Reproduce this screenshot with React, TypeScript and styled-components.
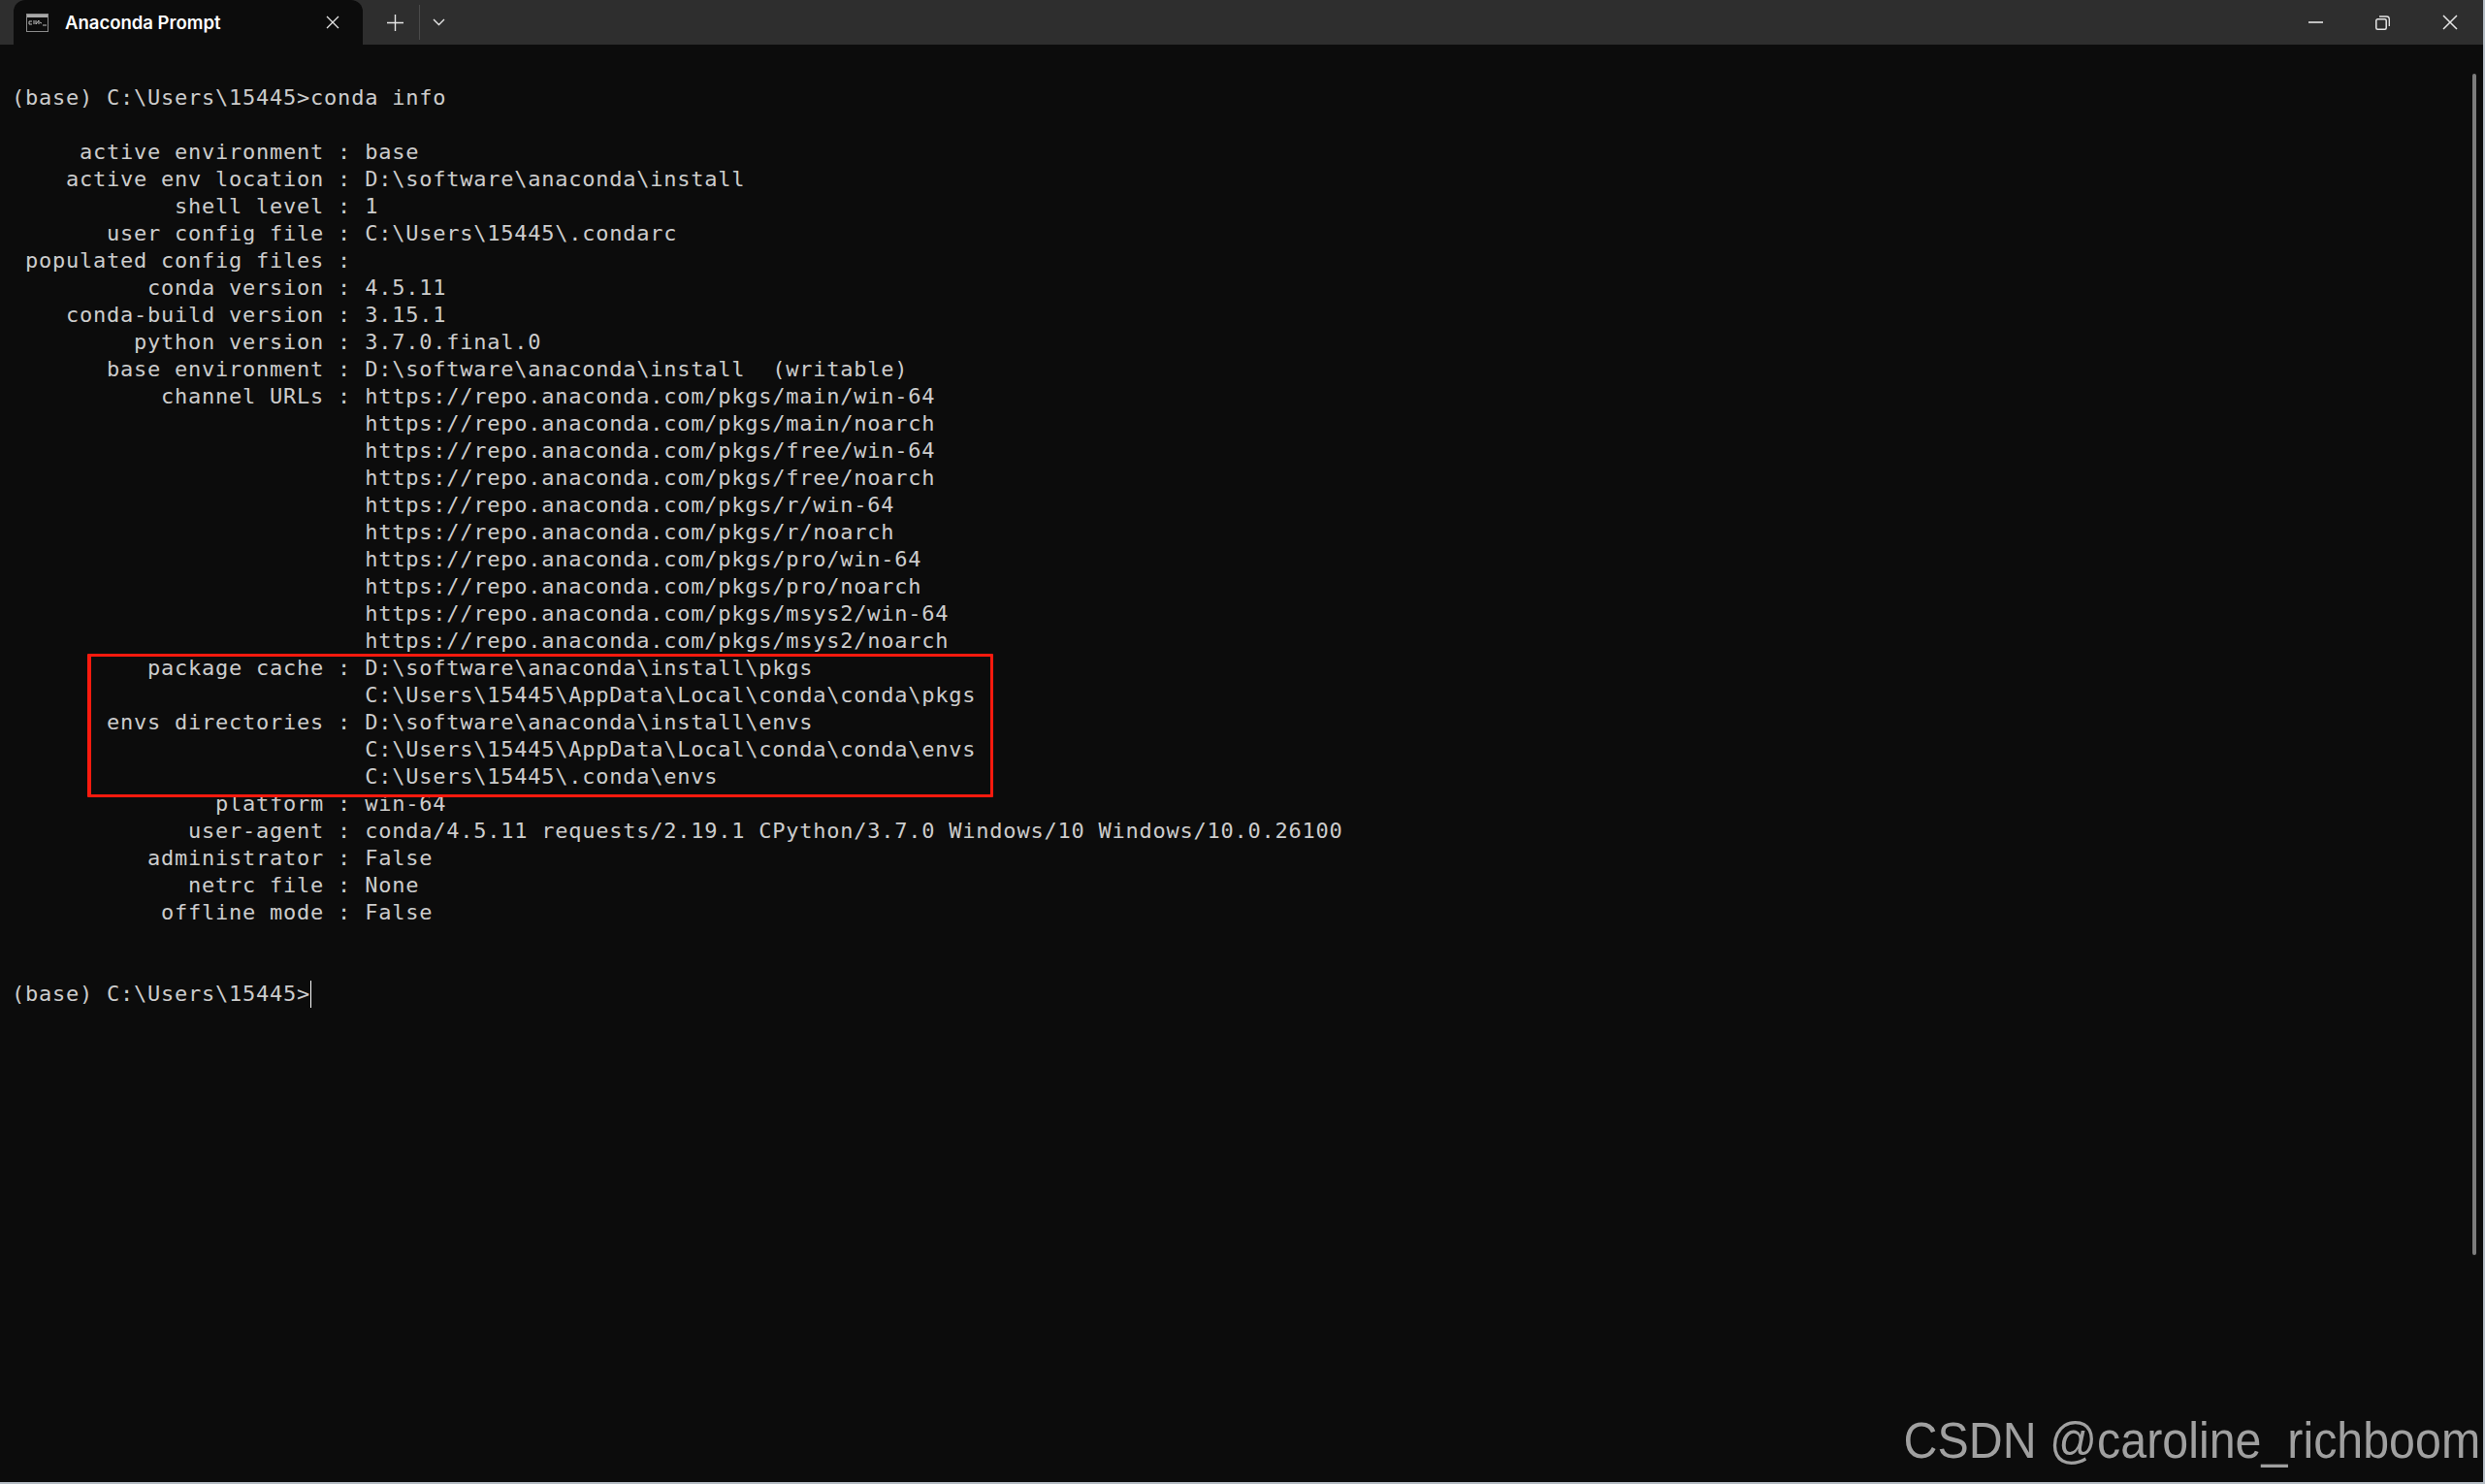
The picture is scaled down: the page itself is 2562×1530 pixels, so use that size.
import React from "react";
import styled, { createGlobalStyle } from "styled-components";

const GlobalStyle = createGlobalStyle`
  html, body {
    margin: 0;
    padding: 0;
    background: #0c0c0c;
  }
`;

const Window = styled.div`
  width: 2562px;
  height: 1530px;
  position: relative;
  overflow: hidden;
  background: #0c0c0c;
  display: flex;
  flex-direction: column;
`;

const TitleBar = styled.div`
  height: 46px;
  flex: none;
  background: #2e2e2e;
  display: flex;
  align-items: flex-end;
  padding-left: 14px;
`;

const Tab = styled.div`
  width: 360px;
  height: 46px;
  box-sizing: border-box;
  background: #0c0c0c;
  border-radius: 12px 12px 0 0;
  display: flex;
  align-items: center;
  padding: 0 24px 0 13px;
  color: #fff;
  font-family: "Inter", "Noto Sans", sans-serif;
  font-size: 18.5px;
  font-weight: 600;
`;

const TabTitle = styled.span`
  margin-left: 17px;
  flex: 1;
`;

const TabActions = styled.div`
  display: flex;
  align-items: center;
  height: 36px;
  margin: 0 0 5px 0;
  padding-left: 25px;
`;

const Divider = styled.div`
  width: 1px;
  height: 36px;
  background: #4a4a4a;
  margin: 0 13px 0 16px;
`;

const WindowButtons = styled.div`
  margin-left: auto;
  display: flex;
  align-items: center;
  gap: 54px;
  padding-right: 28px;
  height: 46px;
`;

const Icon = styled.svg`
  display: block;
  flex: none;
`;

const Screen = styled.pre`
  margin: 0;
  padding: 41px 0 0 12px;
  font-family: "DejaVu Sans Mono", "Liberation Mono", monospace;
  font-size: 22px;
  letter-spacing: 0.76px;
  line-height: 28px;
  color: #cccccc;
`;

const Cursor = styled.span`
  display: inline-block;
  width: 1px;
  height: 28px;
  background: #ffffff;
  vertical-align: -7px;
`;

const Highlight = styled.div`
  position: absolute;
  left: 90px;
  top: 674px;
  width: 934px;
  height: 148px;
  box-sizing: border-box;
  border: 3px solid #fb1a0e;
  border-left-width: 4px;
  border-radius: 1px;
`;

const ScrollThumb = styled.div`
  position: absolute;
  left: 2549px;
  top: 76px;
  width: 4px;
  height: 1218px;
  border-radius: 2px;
  background: #7c7c7c;
`;

const Watermark = styled.div`
  position: absolute;
  right: 5px;
  top: 1458px;
  font-family: "Liberation Sans", Arial, sans-serif;
  font-size: 51px;
  line-height: 56px;
  color: #a0a0a0;
  white-space: nowrap;
  transform: scaleX(0.948);
  transform-origin: right center;
`;

const BottomEdge = styled.div`
  position: absolute;
  left: 0;
  right: 0;
  bottom: 0;
  height: 2px;
  background: #b4bcc4;
`;

const RightEdge = styled.div`
  position: absolute;
  top: 0;
  right: 0;
  bottom: 0;
  width: 2px;
  background: #b4bcc4;
`;

const terminalText = `(base) C:\\Users\\15445>conda info

     active environment : base
    active env location : D:\\software\\anaconda\\install
            shell level : 1
       user config file : C:\\Users\\15445\\.condarc
 populated config files :
          conda version : 4.5.11
    conda-build version : 3.15.1
         python version : 3.7.0.final.0
       base environment : D:\\software\\anaconda\\install  (writable)
           channel URLs : https://repo.anaconda.com/pkgs/main/win-64
                          https://repo.anaconda.com/pkgs/main/noarch
                          https://repo.anaconda.com/pkgs/free/win-64
                          https://repo.anaconda.com/pkgs/free/noarch
                          https://repo.anaconda.com/pkgs/r/win-64
                          https://repo.anaconda.com/pkgs/r/noarch
                          https://repo.anaconda.com/pkgs/pro/win-64
                          https://repo.anaconda.com/pkgs/pro/noarch
                          https://repo.anaconda.com/pkgs/msys2/win-64
                          https://repo.anaconda.com/pkgs/msys2/noarch
          package cache : D:\\software\\anaconda\\install\\pkgs
                          C:\\Users\\15445\\AppData\\Local\\conda\\conda\\pkgs
       envs directories : D:\\software\\anaconda\\install\\envs
                          C:\\Users\\15445\\AppData\\Local\\conda\\conda\\envs
                          C:\\Users\\15445\\.conda\\envs
               platform : win-64
             user-agent : conda/4.5.11 requests/2.19.1 CPython/3.7.0 Windows/10 Windows/10.0.26100
          administrator : False
             netrc file : None
           offline mode : False


(base) C:\\Users\\15445>`;

const App: React.FC = () => {
  return (
    <>
      <GlobalStyle />
      <Window>
        <TitleBar>
          <Tab>
            <Icon width="23" height="19" viewBox="0 0 23 19">
              <rect x="0.5" y="0.5" width="22" height="18" fill="#0c0c0c" stroke="#8a8a8a" />
              <rect x="1" y="1" width="21" height="3" fill="#a8a8a8" />
              <path d="M3 8h3M3 8v3h3M8 7v4M10 7v4l3-4v4M14 9l2 1M17 12h4" stroke="#bdbdbd" strokeWidth="1" fill="none" />
            </Icon>
            <TabTitle>Anaconda Prompt</TabTitle>
            <Icon width="14" height="14" viewBox="0 0 14 14">
              <path d="M1 1l12 12M13 1L1 13" stroke="#e6e6e6" strokeWidth="1.3" />
            </Icon>
          </Tab>
          <TabActions>
            <Icon width="17" height="17" viewBox="0 0 17 17">
              <path d="M8.5 0v17M0 8.5h17" stroke="#e6e6e6" strokeWidth="1.4" />
            </Icon>
            <Divider />
            <Icon width="13" height="8" viewBox="0 0 13 8">
              <path d="M1 1l5.5 5.5L12 1" stroke="#e6e6e6" strokeWidth="1.4" fill="none" />
            </Icon>
          </TabActions>
          <WindowButtons>
            <Icon width="15" height="2" viewBox="0 0 15 2">
              <path d="M0 1h15" stroke="#e6e6e6" strokeWidth="1.6" />
            </Icon>
            <Icon width="15" height="15" viewBox="0 0 15 15">
              <rect x="0.8" y="3.8" width="10.4" height="10.4" rx="1.5" fill="none" stroke="#e6e6e6" strokeWidth="1.5" />
              <path d="M4 1h7.5a2.8 2.8 0 0 1 2.8 2.8V11" fill="none" stroke="#e6e6e6" strokeWidth="1.3" />
            </Icon>
            <Icon width="16" height="16" viewBox="0 0 16 16">
              <path d="M1 1l14 14M15 1L1 15" stroke="#e6e6e6" strokeWidth="1.5" />
            </Icon>
          </WindowButtons>
        </TitleBar>
        <Screen>
          {terminalText}
          <Cursor />
        </Screen>
        <Highlight />
        <ScrollThumb />
        <Watermark>CSDN @caroline_richboom</Watermark>
        <RightEdge />
        <BottomEdge />
      </Window>
    </>
  );
};

export default App;
